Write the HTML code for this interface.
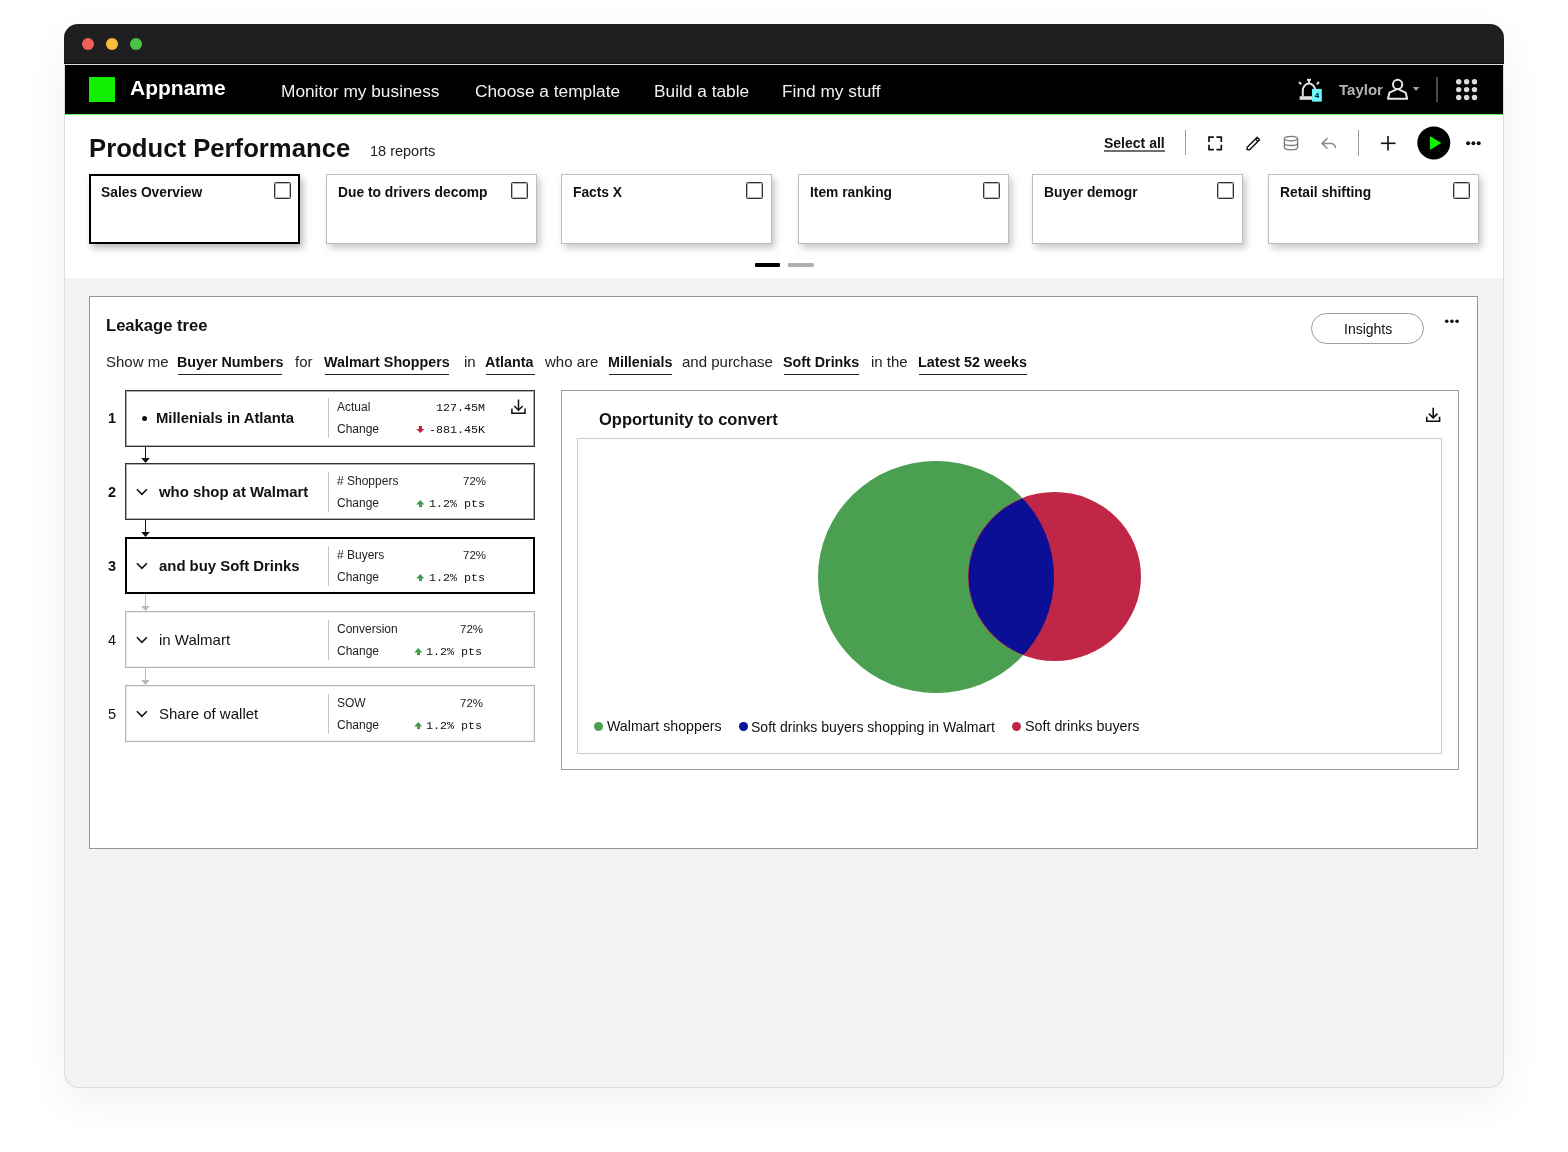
<!DOCTYPE html>
<html><head><meta charset="utf-8"><title>Product Performance</title>
<style>
html,body{margin:0;padding:0;}
body{width:1568px;height:1152px;overflow:hidden;position:relative;background:#ffffff;font-family:'Liberation Sans', sans-serif;}
.t{position:absolute;white-space:pre;will-change:transform;}
.r{position:absolute;box-sizing:border-box;}
svg.r{overflow:visible;}
</style></head><body>
<div class="r" style="left:64px;top:24px;width:1440px;height:1064px;background:#f2f2f2;border:1px solid #dcdce0;border-radius:14px;box-shadow:0 14px 44px rgba(0,0,0,0.06);"></div><div class="r" style="left:64px;top:24px;width:1440px;height:40px;background:#1f1f21;border-radius:14px 14px 0 0;"></div><div class="r" style="left:64px;top:63px;width:1440px;height:1px;background:#0e0e0f;"></div><div class="r" style="left:64px;top:64px;width:1440px;height:1px;background:#dcdce0;"></div><div class="r" style="left:82px;top:38px;width:12px;height:12px;background:#ee5f5a;border-radius:50%;"></div><div class="r" style="left:106px;top:38px;width:12px;height:12px;background:#f5bd3b;border-radius:50%;"></div><div class="r" style="left:130px;top:38px;width:12px;height:12px;background:#4cc443;border-radius:50%;"></div><div class="r" style="left:65px;top:65px;width:1438px;height:49px;background:#000;"></div><div class="r" style="left:65px;top:114px;width:1438px;height:1px;background:#62f45c;"></div><div class="r" style="left:65px;top:115px;width:1438px;height:163px;background:#fff;"></div><div class="r" style="left:89px;top:77px;width:26px;height:25px;background:#12ee00;"></div><div class="t" style="left:130.00px;top:77.22px;font-size:21px;line-height:21px;font-weight:700;color:#fff;font-family:'Liberation Sans', sans-serif;">Appname</div><div class="t" style="left:281.00px;top:82.95px;font-size:17.3px;line-height:17.3px;font-weight:400;color:#f2f2f2;font-family:'Liberation Sans', sans-serif;">Monitor my business</div><div class="t" style="left:475.00px;top:82.95px;font-size:17.3px;line-height:17.3px;font-weight:400;color:#f2f2f2;font-family:'Liberation Sans', sans-serif;">Choose a template</div><div class="t" style="left:654.00px;top:82.95px;font-size:17.3px;line-height:17.3px;font-weight:400;color:#f2f2f2;font-family:'Liberation Sans', sans-serif;">Build a table</div><div class="t" style="left:782.00px;top:82.95px;font-size:17.3px;line-height:17.3px;font-weight:400;color:#f2f2f2;font-family:'Liberation Sans', sans-serif;">Find my stuff</div><svg class="r" style="left:1294px;top:74px;" width="32" height="32" viewBox="0 0 32 32">
<g stroke="#dedede" stroke-width="2" fill="none" stroke-linecap="butt">
<path d="M8.8 22.5 V16.5 A6.2 7 0 0 1 21.2 16.5 V22.5"/>
<path d="M15 9.5 V6"/>
<path d="M13 5.8 H17"/>
<path d="M5 8 L7.2 10.2"/>
<path d="M25 8 L22.8 10.2"/>
</g>
<rect x="5.6" y="22.2" width="20" height="3.6" fill="#dedede"/>
<rect x="18" y="14.9" width="9.8" height="12.7" fill="#6ff6f8"/>
<text x="22.9" y="23.9" font-family="Liberation Sans" font-weight="700" font-size="8" text-anchor="middle" fill="#000">4</text>
</svg><div class="t" style="left:1338.50px;top:81.80px;font-size:15px;line-height:15px;font-weight:700;color:#b3b3b3;font-family:'Liberation Sans', sans-serif;">Taylor</div><svg class="r" style="left:1382px;top:74px;" width="44" height="32" viewBox="0 0 44 32">
<g stroke="#e6e6e6" stroke-width="2" fill="none" stroke-linejoin="round">
<circle cx="15.6" cy="10.4" r="4.6"/>
<path d="M6 24.8 L7.4 18.6 L15.6 14.8 L23.6 18.6 L25.2 24.8 Z"/>
</g>
<path d="M30.6 13 H37.5 L34.05 17.1 Z" fill="#9a9a9a"/>
</svg><div class="r" style="left:1436px;top:77px;width:2px;height:25px;background:#4a4a4a;"></div><svg class="r" style="left:1455.5px;top:78.8px;" width="22" height="22" viewBox="0 0 22 22"><circle cx="2.70" cy="2.70" r="2.7" fill="#dcdcdc"/><circle cx="10.60" cy="2.70" r="2.7" fill="#dcdcdc"/><circle cx="18.50" cy="2.70" r="2.7" fill="#dcdcdc"/><circle cx="2.70" cy="10.60" r="2.7" fill="#dcdcdc"/><circle cx="10.60" cy="10.60" r="2.7" fill="#dcdcdc"/><circle cx="18.50" cy="10.60" r="2.7" fill="#dcdcdc"/><circle cx="2.70" cy="18.50" r="2.7" fill="#dcdcdc"/><circle cx="10.60" cy="18.50" r="2.7" fill="#dcdcdc"/><circle cx="18.50" cy="18.50" r="2.7" fill="#dcdcdc"/></svg><div class="t" style="left:89.00px;top:135.74px;font-size:25.7px;line-height:25.7px;font-weight:700;color:#111;font-family:'Liberation Sans', sans-serif;">Product Performance</div><div class="t" style="left:369.50px;top:143.72px;font-size:14.5px;line-height:14.5px;font-weight:400;color:#222;font-family:'Liberation Sans', sans-serif;">18 reports</div><div class="t" style="left:1104.00px;top:136.15px;font-size:14px;line-height:14px;font-weight:700;color:#111;font-family:'Liberation Sans', sans-serif;">Select all</div><div class="r" style="left:1104px;top:150px;width:61px;height:2px;background:#6e6e6e;"></div><div class="r" style="left:1185px;top:130px;width:1px;height:25px;background:#9a9a9a;"></div><div class="r" style="left:1358px;top:130px;width:1px;height:26px;background:#9a9a9a;"></div><svg class="r" style="left:1206px;top:134px;" width="18" height="18" viewBox="0 0 18 18"><g stroke="#111" stroke-width="1.7" fill="none">
<path d="M3 7.9 V3.1 H7.9"/><path d="M10.4 3.1 H15.3 V7.9"/><path d="M15.3 10.8 V15.6 H10.4"/><path d="M7.9 15.6 H3 V10.8"/></g></svg><svg class="r" style="left:1244px;top:135px;" width="18" height="18" viewBox="0 0 18 18"><g stroke="#111" stroke-width="1.4" fill="none" stroke-linejoin="round">
<path d="M3 14.6 L3.2 12.3 L13.2 2.3 L15.6 4.7 L5.6 14.7 Z"/><path d="M11.5 4 L13.9 6.4"/></g></svg><svg class="r" style="left:1282px;top:134px;" width="18" height="18" viewBox="0 0 18 18"><g stroke="#7a7a7a" stroke-width="1.3" fill="none">
<ellipse cx="9" cy="4.6" rx="6.6" ry="2.3"/>
<path d="M2.4 4.6 V13.6 A6.6 2.3 0 0 0 15.6 13.6 V4.6"/>
<path d="M2.4 9.2 A6.6 2.3 0 0 0 15.6 9.2"/></g></svg><svg class="r" style="left:1320px;top:134px;" width="18" height="18" viewBox="0 0 18 18"><g stroke="#8a8a8a" stroke-width="1.5" fill="none" stroke-linecap="round" stroke-linejoin="round">
<path d="M7 4.6 L2.2 9.4 L7 14.2"/><path d="M2.4 9.4 H10.6 A4.6 4.6 0 0 1 15.4 13.6"/></g></svg><svg class="r" style="left:1379px;top:134px;" width="18" height="18" viewBox="0 0 18 18"><g stroke="#111" stroke-width="1.6"><path d="M9 2 V16.6"/><path d="M1.9 9.3 H16.6"/></g></svg><svg class="r" style="left:1416px;top:125px;" width="36" height="36" viewBox="0 0 36 36"><circle cx="17.8" cy="17.9" r="16.5" fill="#000"/><path d="M13.9 11.1 L25.3 18.1 L13.9 24.9 Z" fill="#12ee00"/></svg><svg class="r" style="left:1464px;top:139px;" width="20" height="8" viewBox="0 0 20 8"><circle cx="4.1" cy="4.2" r="2" fill="#111"/><circle cx="9.4" cy="4.2" r="2" fill="#111"/><circle cx="14.7" cy="4.2" r="2" fill="#111"/></svg><div class="r" style="left:89px;top:174px;width:211px;height:70px;background:#fff;border:2px solid #000;box-shadow:3px 4px 7px rgba(0,0,0,0.28);"></div><div class="t" style="left:100.50px;top:185.62px;font-size:13.8px;line-height:13.8px;font-weight:700;color:#111;font-family:'Liberation Sans', sans-serif;">Sales Overview</div><div class="r" style="left:273.5px;top:182px;width:17px;height:17px;border:1px solid #333;box-shadow:inset 0 0 0 1px rgba(51,51,51,0.35);background:#fff;border-radius:1.5px;"></div><div class="r" style="left:326px;top:174px;width:211px;height:70px;background:#fff;border:1px solid #bdbdbd;box-shadow:3px 4px 7px rgba(0,0,0,0.22);"></div><div class="t" style="left:337.50px;top:185.62px;font-size:13.8px;line-height:13.8px;font-weight:700;color:#111;font-family:'Liberation Sans', sans-serif;">Due to drivers decomp</div><div class="r" style="left:510.5px;top:182px;width:17px;height:17px;border:1px solid #333;box-shadow:inset 0 0 0 1px rgba(51,51,51,0.35);background:#fff;border-radius:1.5px;"></div><div class="r" style="left:561px;top:174px;width:211px;height:70px;background:#fff;border:1px solid #bdbdbd;box-shadow:3px 4px 7px rgba(0,0,0,0.22);"></div><div class="t" style="left:572.50px;top:185.62px;font-size:13.8px;line-height:13.8px;font-weight:700;color:#111;font-family:'Liberation Sans', sans-serif;">Facts X</div><div class="r" style="left:745.5px;top:182px;width:17px;height:17px;border:1px solid #333;box-shadow:inset 0 0 0 1px rgba(51,51,51,0.35);background:#fff;border-radius:1.5px;"></div><div class="r" style="left:798px;top:174px;width:211px;height:70px;background:#fff;border:1px solid #bdbdbd;box-shadow:3px 4px 7px rgba(0,0,0,0.22);"></div><div class="t" style="left:809.50px;top:185.62px;font-size:13.8px;line-height:13.8px;font-weight:700;color:#111;font-family:'Liberation Sans', sans-serif;">Item ranking</div><div class="r" style="left:982.5px;top:182px;width:17px;height:17px;border:1px solid #333;box-shadow:inset 0 0 0 1px rgba(51,51,51,0.35);background:#fff;border-radius:1.5px;"></div><div class="r" style="left:1032px;top:174px;width:211px;height:70px;background:#fff;border:1px solid #bdbdbd;box-shadow:3px 4px 7px rgba(0,0,0,0.22);"></div><div class="t" style="left:1043.50px;top:185.62px;font-size:13.8px;line-height:13.8px;font-weight:700;color:#111;font-family:'Liberation Sans', sans-serif;">Buyer demogr</div><div class="r" style="left:1216.5px;top:182px;width:17px;height:17px;border:1px solid #333;box-shadow:inset 0 0 0 1px rgba(51,51,51,0.35);background:#fff;border-radius:1.5px;"></div><div class="r" style="left:1268px;top:174px;width:211px;height:70px;background:#fff;border:1px solid #bdbdbd;box-shadow:3px 4px 7px rgba(0,0,0,0.22);"></div><div class="t" style="left:1279.50px;top:185.62px;font-size:13.8px;line-height:13.8px;font-weight:700;color:#111;font-family:'Liberation Sans', sans-serif;">Retail shifting</div><div class="r" style="left:1452.5px;top:182px;width:17px;height:17px;border:1px solid #333;box-shadow:inset 0 0 0 1px rgba(51,51,51,0.35);background:#fff;border-radius:1.5px;"></div><div class="r" style="left:754.5px;top:262.7px;width:25.5px;height:4.3px;background:#000;border-radius:1px;"></div><div class="r" style="left:788px;top:262.7px;width:25.5px;height:4.3px;background:#b0b0b0;border-radius:1px;"></div><div class="r" style="left:89px;top:296px;width:1389px;height:553px;background:#fff;border:1px solid #969696;"></div><div class="t" style="left:106.00px;top:317.94px;font-size:16.6px;line-height:16.6px;font-weight:700;color:#111;font-family:'Liberation Sans', sans-serif;">Leakage tree</div><div class="r" style="left:1311px;top:313px;width:113px;height:31px;border:1px solid #9d9d9d;border-radius:16px;background:#fff;"></div><div class="t" style="left:1343.50px;top:322.15px;font-size:14px;line-height:14px;font-weight:400;color:#111;font-family:'Liberation Sans', sans-serif;">Insights</div><svg class="r" style="left:1443px;top:318px;" width="18" height="7" viewBox="0 0 18 7"><circle cx="3.7" cy="3.3" r="1.8" fill="#111"/><circle cx="8.9" cy="3.3" r="1.8" fill="#111"/><circle cx="14.1" cy="3.3" r="1.8" fill="#111"/></svg><div class="t" style="left:106.00px;top:354.30px;font-size:15px;line-height:15px;font-weight:400;color:#222;font-family:'Liberation Sans', sans-serif;">Show me</div><div class="t" style="left:295.00px;top:354.30px;font-size:15px;line-height:15px;font-weight:400;color:#222;font-family:'Liberation Sans', sans-serif;">for</div><div class="t" style="left:464.00px;top:354.30px;font-size:15px;line-height:15px;font-weight:400;color:#222;font-family:'Liberation Sans', sans-serif;">in</div><div class="t" style="left:545.00px;top:354.30px;font-size:15px;line-height:15px;font-weight:400;color:#222;font-family:'Liberation Sans', sans-serif;">who are</div><div class="t" style="left:682.00px;top:354.30px;font-size:15px;line-height:15px;font-weight:400;color:#222;font-family:'Liberation Sans', sans-serif;">and purchase</div><div class="t" style="left:870.50px;top:354.30px;font-size:15px;line-height:15px;font-weight:400;color:#222;font-family:'Liberation Sans', sans-serif;">in the</div><div class="t" style="left:177.00px;top:354.89px;font-size:14.3px;line-height:14.3px;font-weight:700;color:#111;font-family:'Liberation Sans', sans-serif;">Buyer Numbers</div><div class="r" style="left:178px;top:373.5px;width:104.0px;height:1.6px;background:#222;"></div><div class="t" style="left:323.50px;top:354.89px;font-size:14.3px;line-height:14.3px;font-weight:700;color:#111;font-family:'Liberation Sans', sans-serif;">Walmart Shoppers</div><div class="r" style="left:324.5px;top:373.5px;width:124.5px;height:1.6px;background:#222;"></div><div class="t" style="left:485.00px;top:354.89px;font-size:14.3px;line-height:14.3px;font-weight:700;color:#111;font-family:'Liberation Sans', sans-serif;">Atlanta</div><div class="r" style="left:486px;top:373.5px;width:49.0px;height:1.6px;background:#222;"></div><div class="t" style="left:607.50px;top:354.89px;font-size:14.3px;line-height:14.3px;font-weight:700;color:#111;font-family:'Liberation Sans', sans-serif;">Millenials</div><div class="r" style="left:608.5px;top:373.5px;width:63.0px;height:1.6px;background:#222;"></div><div class="t" style="left:782.50px;top:354.89px;font-size:14.3px;line-height:14.3px;font-weight:700;color:#111;font-family:'Liberation Sans', sans-serif;">Soft Drinks</div><div class="r" style="left:783.5px;top:373.5px;width:75.5px;height:1.6px;background:#222;"></div><div class="t" style="left:917.50px;top:354.89px;font-size:14.3px;line-height:14.3px;font-weight:700;color:#111;font-family:'Liberation Sans', sans-serif;">Latest 52 weeks</div><div class="r" style="left:918.5px;top:373.5px;width:108.5px;height:1.6px;background:#222;"></div><div class="r" style="left:125px;top:390px;width:410px;height:57px;background:#fff;border:1px solid #333;box-shadow:inset 0 0 0 1px rgba(60,60,60,0.42);"></div><div class="t" style="left:107.50px;top:410.72px;font-size:14.5px;line-height:14.5px;font-weight:700;color:#111;font-family:'Liberation Sans', sans-serif;">1</div><div class="r" style="left:141.7px;top:416.2px;width:5px;height:5px;background:#111;border-radius:50%;"></div><div class="t" style="left:155.50px;top:411.23px;font-size:14.85px;line-height:14.85px;font-weight:700;color:#111;font-family:'Liberation Sans', sans-serif;">Millenials in Atlanta</div><div class="r" style="left:328px;top:398px;width:1px;height:40px;background:#c4c4c4;"></div><div class="t" style="left:337.00px;top:401.44px;font-size:12px;line-height:12px;font-weight:400;color:#222;font-family:'Liberation Sans', sans-serif;">Actual</div><div class="t" style="left:337.00px;top:423.34px;font-size:12px;line-height:12px;font-weight:400;color:#222;font-family:'Liberation Sans', sans-serif;">Change</div><div class="t" style="right:1083.20px;top:402.54px;font-size:11.7px;line-height:11.7px;font-weight:400;color:#111;font-family:'Liberation Mono', monospace;text-align:right;">127.45M</div><div class="t" style="right:1083.20px;top:424.54px;font-size:11.7px;line-height:11.7px;font-weight:400;color:#111;font-family:'Liberation Mono', monospace;text-align:right;">-881.45K</div><svg class="r" style="left:414px;top:424px;" width="12" height="10" viewBox="0 0 12 10"><rect x="5" y="1.9" width="3" height="3.4" fill="#c31f3e"/><path d="M2.3 4.9 H10.3 L6.3 9.1 Z" fill="#c31f3e"/></svg><svg class="r" style="left:508px;top:398px;" width="20" height="18" viewBox="0 0 20 18"><g stroke="#111" stroke-width="1.5" fill="none"><path d="M10.5 1.5 V12"/><path d="M6.3 8 L10.5 12.2 L14.7 8"/><path d="M3.9 10.5 V15.2 H17 V10.5"/></g></svg><div class="r" style="left:145px;top:447px;width:1.2px;height:12px;background:#111;"></div><svg class="r" style="left:140px;top:457px;" width="12" height="7" viewBox="0 0 12 7"><path d="M1.2 1 H9.8 L5.5 6 Z" fill="#111"/></svg><div class="r" style="left:125px;top:463px;width:410px;height:57px;background:#fff;border:1px solid #333;box-shadow:inset 0 0 0 1px rgba(60,60,60,0.42);"></div><div class="t" style="left:107.50px;top:484.72px;font-size:14.5px;line-height:14.5px;font-weight:700;color:#111;font-family:'Liberation Sans', sans-serif;">2</div><svg class="r" style="left:134px;top:487px;" width="16" height="10" viewBox="0 0 16 10"><path d="M2.9 2.2 L7.9 7.3 L12.9 2.2" stroke="#111" stroke-width="1.6" fill="none"/></svg><div class="t" style="left:158.50px;top:485.18px;font-size:14.9px;line-height:14.9px;font-weight:700;color:#111;font-family:'Liberation Sans', sans-serif;">who shop at Walmart</div><div class="r" style="left:328px;top:472px;width:1px;height:40px;background:#c4c4c4;"></div><div class="t" style="left:337.00px;top:475.44px;font-size:12px;line-height:12px;font-weight:400;color:#222;font-family:'Liberation Sans', sans-serif;"># Shoppers</div><div class="t" style="left:337.00px;top:497.34px;font-size:12px;line-height:12px;font-weight:400;color:#222;font-family:'Liberation Sans', sans-serif;">Change</div><div class="t" style="right:1082.00px;top:475.76px;font-size:11.5px;line-height:11.5px;font-weight:400;color:#222;font-family:'Liberation Sans', sans-serif;text-align:right;">72%</div><div class="t" style="right:1083.20px;top:498.54px;font-size:11.7px;line-height:11.7px;font-weight:400;color:#111;font-family:'Liberation Mono', monospace;text-align:right;">1.2% pts</div><svg class="r" style="left:414px;top:498px;" width="12" height="10" viewBox="0 0 12 10"><rect x="5" y="6.2" width="3" height="2.9" fill="#3f9a4c"/><path d="M2.2 6.6 H10.3 L6.3 1.9 Z" fill="#3f9a4c"/></svg><div class="r" style="left:145px;top:520px;width:1.2px;height:13px;background:#111;"></div><svg class="r" style="left:140px;top:531px;" width="12" height="7" viewBox="0 0 12 7"><path d="M1.2 1 H9.8 L5.5 6 Z" fill="#111"/></svg><div class="r" style="left:125px;top:537px;width:410px;height:57px;background:#fff;border:2px solid #000;"></div><div class="t" style="left:107.50px;top:558.72px;font-size:14.5px;line-height:14.5px;font-weight:700;color:#111;font-family:'Liberation Sans', sans-serif;">3</div><svg class="r" style="left:134px;top:561px;" width="16" height="10" viewBox="0 0 16 10"><path d="M2.9 2.2 L7.9 7.3 L12.9 2.2" stroke="#111" stroke-width="1.6" fill="none"/></svg><div class="t" style="left:158.50px;top:559.18px;font-size:14.9px;line-height:14.9px;font-weight:700;color:#111;font-family:'Liberation Sans', sans-serif;">and buy Soft Drinks</div><div class="r" style="left:328px;top:546px;width:1px;height:40px;background:#c4c4c4;"></div><div class="t" style="left:337.00px;top:549.44px;font-size:12px;line-height:12px;font-weight:400;color:#222;font-family:'Liberation Sans', sans-serif;"># Buyers</div><div class="t" style="left:337.00px;top:571.34px;font-size:12px;line-height:12px;font-weight:400;color:#222;font-family:'Liberation Sans', sans-serif;">Change</div><div class="t" style="right:1082.00px;top:549.76px;font-size:11.5px;line-height:11.5px;font-weight:400;color:#222;font-family:'Liberation Sans', sans-serif;text-align:right;">72%</div><div class="t" style="right:1083.20px;top:572.54px;font-size:11.7px;line-height:11.7px;font-weight:400;color:#111;font-family:'Liberation Mono', monospace;text-align:right;">1.2% pts</div><svg class="r" style="left:414px;top:572px;" width="12" height="10" viewBox="0 0 12 10"><rect x="5" y="6.2" width="3" height="2.9" fill="#3f9a4c"/><path d="M2.2 6.6 H10.3 L6.3 1.9 Z" fill="#3f9a4c"/></svg><div class="r" style="left:145px;top:594px;width:1.2px;height:13px;background:#b9b9b9;"></div><svg class="r" style="left:140px;top:605px;" width="12" height="7" viewBox="0 0 12 7"><path d="M1.2 1 H9.8 L5.5 6 Z" fill="#b9b9b9"/></svg><div class="r" style="left:125px;top:611px;width:410px;height:57px;background:#fff;border:1px solid #b4b4b4;box-shadow:inset 0 0 0 1px rgba(180,180,180,0.22);"></div><div class="t" style="left:107.50px;top:632.72px;font-size:14.5px;line-height:14.5px;font-weight:400;color:#111;font-family:'Liberation Sans', sans-serif;">4</div><svg class="r" style="left:134px;top:635px;" width="16" height="10" viewBox="0 0 16 10"><path d="M2.9 2.2 L7.9 7.3 L12.9 2.2" stroke="#111" stroke-width="1.6" fill="none"/></svg><div class="t" style="left:158.50px;top:632.30px;font-size:15px;line-height:15px;font-weight:400;color:#111;font-family:'Liberation Sans', sans-serif;">in Walmart</div><div class="r" style="left:328px;top:620px;width:1px;height:40px;background:#c4c4c4;"></div><div class="t" style="left:337.00px;top:623.44px;font-size:12px;line-height:12px;font-weight:400;color:#222;font-family:'Liberation Sans', sans-serif;">Conversion</div><div class="t" style="left:337.00px;top:645.34px;font-size:12px;line-height:12px;font-weight:400;color:#222;font-family:'Liberation Sans', sans-serif;">Change</div><div class="t" style="right:1084.50px;top:623.76px;font-size:11.5px;line-height:11.5px;font-weight:400;color:#222;font-family:'Liberation Sans', sans-serif;text-align:right;">72%</div><div class="t" style="right:1085.70px;top:646.54px;font-size:11.7px;line-height:11.7px;font-weight:400;color:#111;font-family:'Liberation Mono', monospace;text-align:right;">1.2% pts</div><svg class="r" style="left:411.5px;top:646px;" width="12" height="10" viewBox="0 0 12 10"><rect x="5" y="6.2" width="3" height="2.9" fill="#3f9a4c"/><path d="M2.2 6.6 H10.3 L6.3 1.9 Z" fill="#3f9a4c"/></svg><div class="r" style="left:145px;top:668px;width:1.2px;height:13px;background:#b9b9b9;"></div><svg class="r" style="left:140px;top:679px;" width="12" height="7" viewBox="0 0 12 7"><path d="M1.2 1 H9.8 L5.5 6 Z" fill="#b9b9b9"/></svg><div class="r" style="left:125px;top:685px;width:410px;height:57px;background:#fff;border:1px solid #b4b4b4;box-shadow:inset 0 0 0 1px rgba(180,180,180,0.22);"></div><div class="t" style="left:107.50px;top:706.72px;font-size:14.5px;line-height:14.5px;font-weight:400;color:#111;font-family:'Liberation Sans', sans-serif;">5</div><svg class="r" style="left:134px;top:709px;" width="16" height="10" viewBox="0 0 16 10"><path d="M2.9 2.2 L7.9 7.3 L12.9 2.2" stroke="#111" stroke-width="1.6" fill="none"/></svg><div class="t" style="left:158.50px;top:706.30px;font-size:15px;line-height:15px;font-weight:400;color:#111;font-family:'Liberation Sans', sans-serif;">Share of wallet</div><div class="r" style="left:328px;top:694px;width:1px;height:40px;background:#c4c4c4;"></div><div class="t" style="left:337.00px;top:697.44px;font-size:12px;line-height:12px;font-weight:400;color:#222;font-family:'Liberation Sans', sans-serif;">SOW</div><div class="t" style="left:337.00px;top:719.34px;font-size:12px;line-height:12px;font-weight:400;color:#222;font-family:'Liberation Sans', sans-serif;">Change</div><div class="t" style="right:1084.50px;top:697.76px;font-size:11.5px;line-height:11.5px;font-weight:400;color:#222;font-family:'Liberation Sans', sans-serif;text-align:right;">72%</div><div class="t" style="right:1085.70px;top:720.54px;font-size:11.7px;line-height:11.7px;font-weight:400;color:#111;font-family:'Liberation Mono', monospace;text-align:right;">1.2% pts</div><svg class="r" style="left:411.5px;top:720px;" width="12" height="10" viewBox="0 0 12 10"><rect x="5" y="6.2" width="3" height="2.9" fill="#3f9a4c"/><path d="M2.2 6.6 H10.3 L6.3 1.9 Z" fill="#3f9a4c"/></svg><div class="r" style="left:561px;top:390px;width:898px;height:380px;background:#fff;border:1px solid #9b9b9b;"></div><div class="t" style="left:598.50px;top:410.83px;font-size:16.5px;line-height:16.5px;font-weight:700;color:#111;font-family:'Liberation Sans', sans-serif;">Opportunity to convert</div><svg class="r" style="left:1424px;top:405px;" width="18" height="18" viewBox="0 0 18 18"><g stroke="#111" stroke-width="1.6" fill="none"><path d="M9.2 2.8 V13"/><path d="M4.9 8.6 L9.2 12.9 L13.5 8.6"/><path d="M2.8 11.8 V16.2 H15.6 V11.8"/></g></svg><div class="r" style="left:577px;top:438px;width:865px;height:316px;background:#fff;border:1px solid #cdcdcd;"></div><svg class="r" style="left:800px;top:450px;" width="360" height="260" viewBox="0 0 360 260">
<defs><clipPath id="cg"><ellipse cx="136" cy="127" rx="118" ry="116"/></clipPath></defs>
<ellipse cx="136" cy="127" rx="118" ry="116" fill="#4a9f51"/>
<ellipse cx="254.5" cy="126.5" rx="86.5" ry="84.5" fill="#c02645"/>
<ellipse cx="254.5" cy="126.5" rx="85.9" ry="83.9" fill="#0b0f96" clip-path="url(#cg)"/>
</svg><div class="r" style="left:594.0px;top:722.2px;width:9px;height:9px;background:#4a9f51;border-radius:50%;"></div><div class="t" style="left:607.00px;top:719.48px;font-size:14.2px;line-height:14.2px;font-weight:400;color:#111;font-family:'Liberation Sans', sans-serif;">Walmart shoppers</div><div class="r" style="left:738.5px;top:722.2px;width:9px;height:9px;background:#0b0f96;border-radius:50%;"></div><div class="t" style="left:751.00px;top:719.60px;font-size:14.05px;line-height:14.05px;font-weight:400;color:#111;font-family:'Liberation Sans', sans-serif;">Soft drinks buyers shopping in Walmart</div><div class="r" style="left:1012.3px;top:722.2px;width:9px;height:9px;background:#c02645;border-radius:50%;"></div><div class="t" style="left:1025.00px;top:719.39px;font-size:14.3px;line-height:14.3px;font-weight:400;color:#111;font-family:'Liberation Sans', sans-serif;">Soft drinks buyers</div>
</body></html>
